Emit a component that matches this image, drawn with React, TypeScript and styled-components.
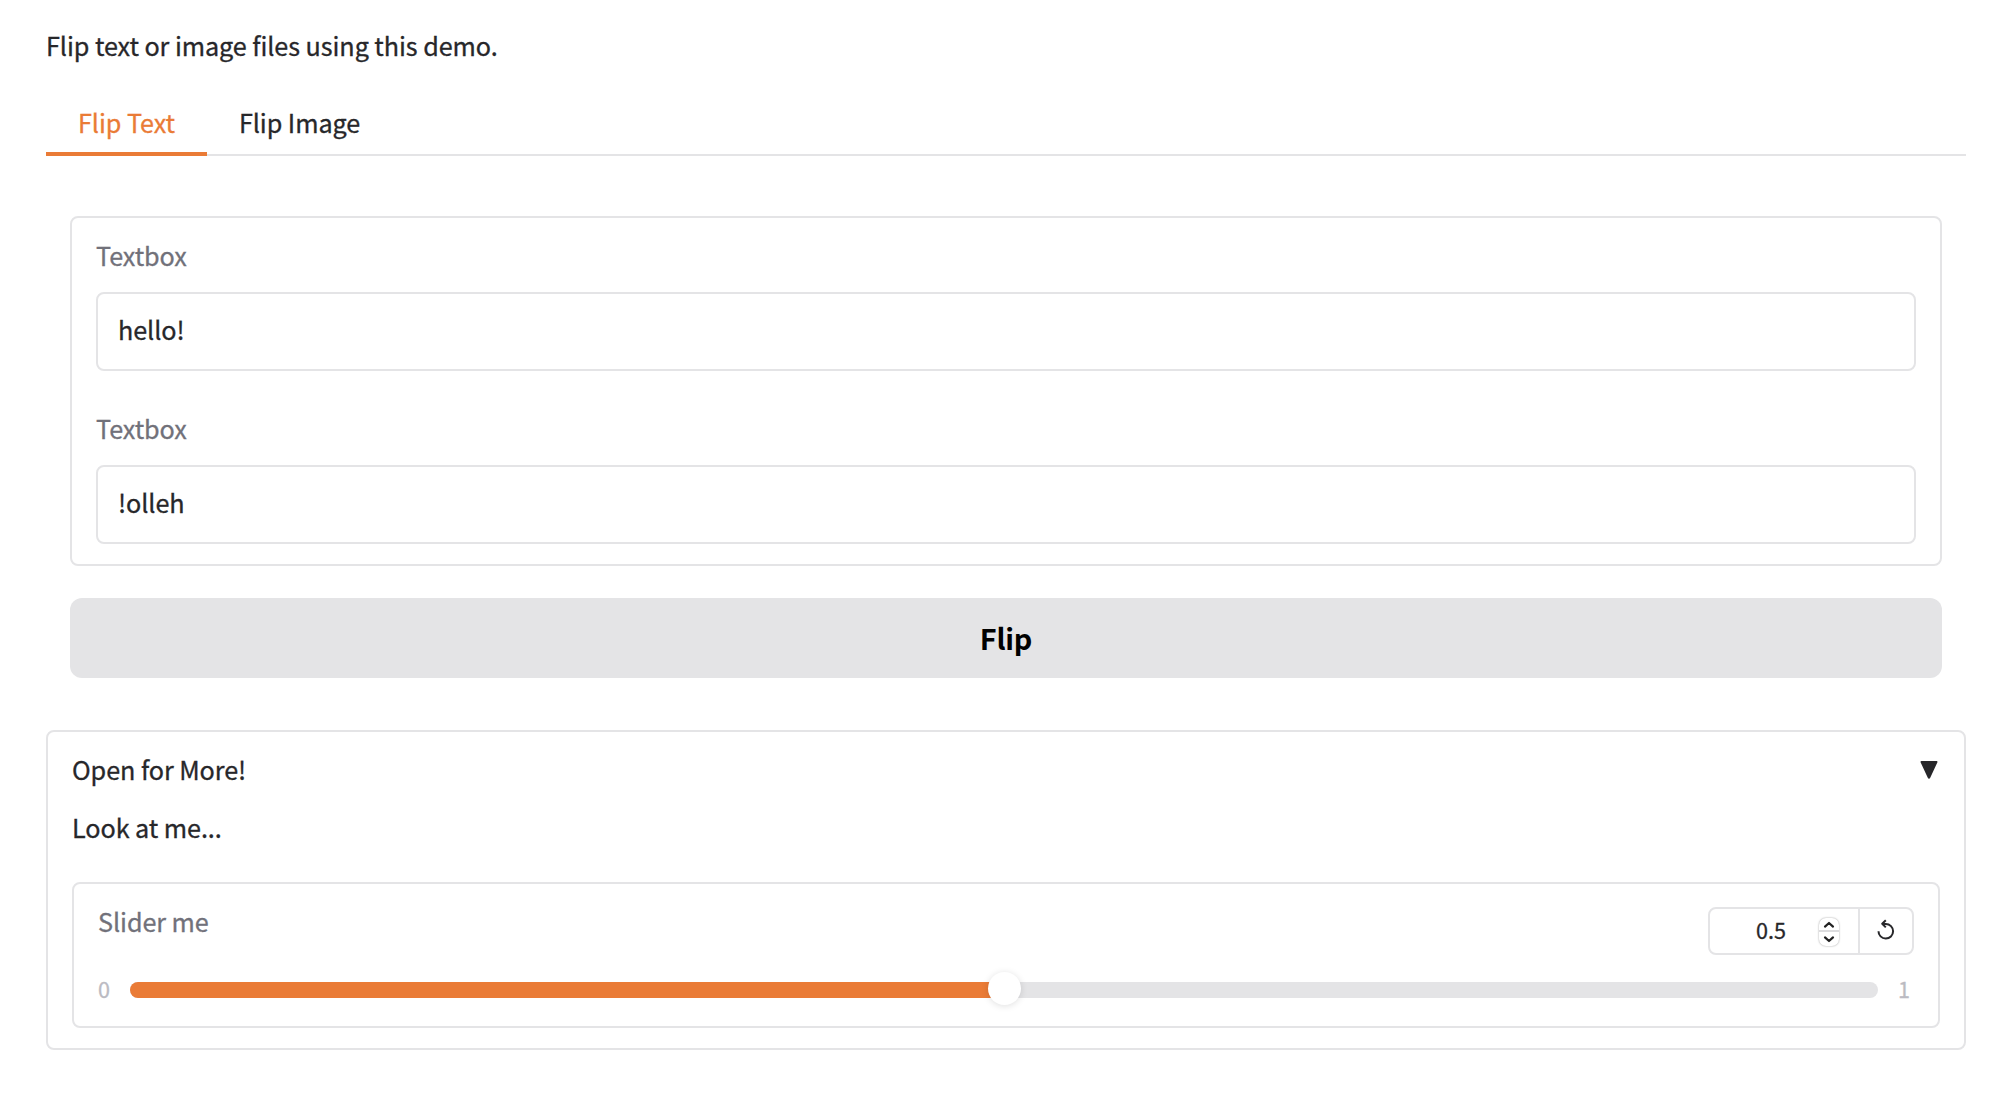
import React, { useState } from "react";
import styled, { createGlobalStyle } from "styled-components";

const line = "#e4e4e6";
const accent = "#ea7b36";
const ink = "#27272a";
const muted = "#71717a";

const GlobalStyle = createGlobalStyle`
  *, *::before, *::after { box-sizing: border-box; }
  body {
    margin: 0;
    background: #fff;
    color: ${ink};
    font-family: "Noto Sans CJK SC", "Noto Sans", sans-serif;
    font-size: 25.2px;
    line-height: 40px;
    letter-spacing: -0.07px;
    -webkit-text-stroke: 0.3px;
  }
  button, input { font: inherit; color: inherit; letter-spacing: inherit; }
  p { margin: 0; }
`;

const Page = styled.main`
  display: flex;
  flex-direction: column;
  padding: 25px 48px 44px 46px;
  height: 1094px;
`;

const Intro = styled.p`
  height: 40px;
`;

const TabBar = styled.div`
  display: flex;
  height: 64px;
  margin-top: 27px;
  box-shadow: inset 0 -2px 0 ${line};
`;

const Tab = styled.button<{ $active?: boolean }>`
  display: flex;
  padding: 10px 32px 0;
  border: 0;
  border-bottom: 4px solid ${(p) => (p.$active ? accent : "transparent")};
  background: none;
  color: ${(p) => (p.$active ? accent : ink)};
  white-space: nowrap;
`;

const TabPanel = styled.section`
  display: flex;
  flex-direction: column;
  gap: 32px;
  padding: 60px 24px 0;
`;

const Form = styled.div`
  display: flex;
  flex-direction: column;
  gap: 39px;
  height: 350px;
  padding: 19px 24px 0;
  border: 2px solid ${line};
  border-radius: 8px;
`;

const Field = styled.label`
  display: flex;
  flex-direction: column;
  gap: 20px;
  height: 134px;
`;

const Label = styled.span`
  height: 35px;
  line-height: 36px;
  color: ${muted};
`;

const TextInput = styled.input`
  height: 79px;
  padding: 0 20px 5px;
  border: 2px solid ${line};
  border-radius: 8px;
  outline: none;
  background: #fff;
`;

const FlipButton = styled.button`
  height: 80px;
  padding: 0 0 1px;
  border: 0;
  border-radius: 12px;
  background: ${line};
  color: #000;
  font-size: 28.8px;
  font-weight: 700;
  letter-spacing: -0.2px;
  -webkit-text-stroke: 0;
`;

const Accordion = styled.section`
  height: 320px;
  margin-top: 52px;
  padding: 17px 24px 0;
  border: 2px solid ${line};
  border-radius: 8px;
`;

const AccordionHeader = styled.div`
  display: flex;
  justify-content: space-between;
  height: 40px;
`;

const Arrow = styled.svg`
  width: 18px;
  height: 18px;
  margin: 12px 2px 0 0;
`;

const Note = styled.p`
  height: 40px;
  margin-top: 18px;
`;

const SliderCard = styled.div`
  height: 146px;
  margin-top: 35px;
  padding: 23px 24px 0;
  border: 2px solid ${line};
  border-radius: 8px;
`;

const SliderHead = styled.div`
  display: flex;
  justify-content: space-between;
  height: 48px;
`;

const SliderLabel = styled.span`
  height: 40px;
  line-height: 28px;
  color: ${muted};
`;

const ValueGroup = styled.div`
  display: flex;
  width: 206px;
  height: 48px;
  border: 2px solid ${line};
  border-radius: 8px;
`;

const ValueCell = styled.div`
  display: flex;
  flex: 1;
  align-items: center;
  justify-content: flex-end;
  padding-right: 19px;
  border-right: 2px solid ${line};
  font-size: 21.6px;
`;

const ValueText = styled.span`
  width: 32px;
  margin: 0 32px 2px 0;
  text-align: center;
`;

const Stepper = styled.span`
  display: flex;
  flex-direction: column;
  width: 20px;
  height: 28px;
  margin-top: 2px;
  border-radius: 7px;
  background: #fff;
  box-shadow: 0 0 2px rgba(0, 0, 0, 0.4);
`;

const StepIcon = styled.svg<{ $up?: boolean }>`
  width: 20px;
  height: 14px;
  border-bottom: ${(p) => (p.$up ? "2px solid #dcdcde" : "0")};
`;

const ResetButton = styled.button`
  display: flex;
  align-items: center;
  justify-content: center;
  width: 52px;
  padding: 0 0 2px;
  border: 0;
  background: none;
`;

const SliderRow = styled.div`
  display: flex;
  align-items: center;
  height: 16px;
  margin-top: 27px;
  font-size: 21.6px;
  color: #bbbbc2;
`;

const Bound = styled.span<{ $end?: boolean }>`
  width: ${(p) => (p.$end ? 36 : 32)}px;
  padding-left: ${(p) => (p.$end ? 20 : 0)}px;
  padding-bottom: 2px;
`;

const Track = styled.div`
  position: relative;
  flex: 1;
  height: 16px;
  border-radius: 8px;
  background: ${line};
`;

const Fill = styled.div`
  height: 16px;
  border-radius: 8px 0 0 8px;
  background: ${accent};
`;

const Thumb = styled.span`
  position: absolute;
  top: -10px;
  width: 33px;
  height: 33px;
  margin-left: -16.5px;
  border-radius: 50%;
  background: #fff;
  box-shadow: 0 1px 7px rgba(0, 0, 0, 0.13);
`;

export default function App() {
  const [tab, setTab] = useState(0);
  const [text, setText] = useState("hello!");
  const [result, setResult] = useState("!olleh");
  const [value, setValue] = useState(0.5);

  return (
    <>
      <GlobalStyle />
      <Page>
        <Intro>Flip text or image files using this demo.</Intro>
        <TabBar>
          <Tab $active={tab === 0} onClick={() => setTab(0)}>Flip Text</Tab>
          <Tab $active={tab === 1} onClick={() => setTab(1)}>Flip Image</Tab>
        </TabBar>
        <TabPanel>
          <Form>
            <Field>
              <Label>Textbox</Label>
              <TextInput value={text} onChange={(e) => setText(e.target.value)} />
            </Field>
            <Field>
              <Label>Textbox</Label>
              <TextInput value={result} readOnly />
            </Field>
          </Form>
          <FlipButton onClick={() => setResult([...text].reverse().join(""))}>Flip</FlipButton>
        </TabPanel>
        <Accordion>
          <AccordionHeader>
            <span>Open for More!</span>
            <Arrow viewBox="0 0 18 18">
              <path d="M1.3 0.9H16.7L9.5 16.4Q9 17.4 8.5 16.4Z" fill={ink} stroke={ink} strokeWidth="1.6" strokeLinejoin="round" />
            </Arrow>
          </AccordionHeader>
          <Note>Look at me...</Note>
          <SliderCard>
            <SliderHead>
              <SliderLabel>Slider me</SliderLabel>
              <ValueGroup>
                <ValueCell>
                  <ValueText>{value}</ValueText>
                  <Stepper>
                    <StepIcon $up viewBox="0 0 20 12">
                      <path d="M6 8.6L10 5L14 8.6" fill="none" stroke="#222" strokeWidth="2.2" strokeLinecap="round" strokeLinejoin="round" />
                    </StepIcon>
                    <StepIcon viewBox="0 0 20 14">
                      <path d="M6 5.4L10 9L14 5.4" fill="none" stroke="#222" strokeWidth="2.2" strokeLinecap="round" strokeLinejoin="round" />
                    </StepIcon>
                  </Stepper>
                </ValueCell>
                <ResetButton aria-label="Reset" onClick={() => setValue(0.5)}>
                  <svg width="20" height="22" viewBox="0 0 20 22">
                    <path d="M2.5 12.2A7.3 7.3 0 1 0 9.8 5H6.4M9.8 1.2L6.2 4.8L9.8 8.4" fill="none" stroke={ink} strokeWidth="2" strokeLinejoin="round" />
                  </svg>
                </ResetButton>
              </ValueGroup>
            </SliderHead>
            <SliderRow>
              <Bound>0</Bound>
              <Track>
                <Fill style={{ width: `${value * 100}%` }} />
                <Thumb style={{ left: `${value * 100}%` }} />
              </Track>
              <Bound $end>1</Bound>
            </SliderRow>
          </SliderCard>
        </Accordion>
      </Page>
    </>
  );
}
